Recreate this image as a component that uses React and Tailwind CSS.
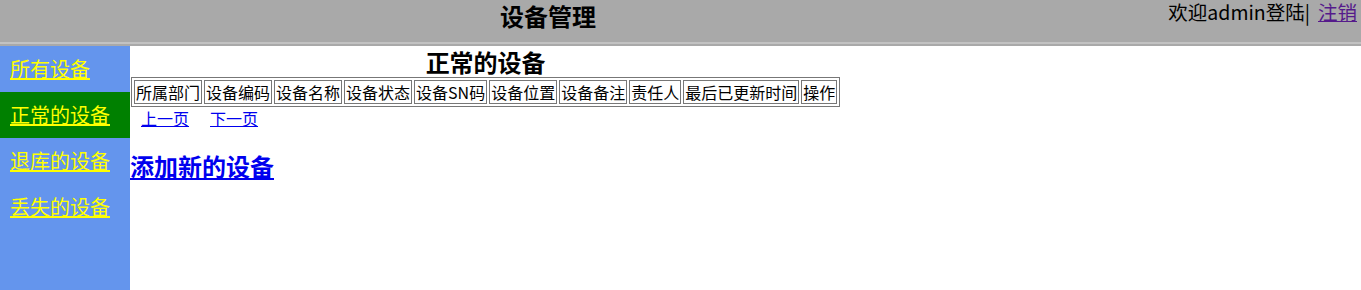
import React from "react";

const cols = ["所属部门","设备编码","设备名称","设备状态","设备SN码","设备位置","设备备注","责任人","最后已更新时间","操作"];
const navs = ["所有设备","正常的设备","退库的设备","丢失的设备"];

export default function App() {
  return (
    <div className="w-[1361px] h-[290px] overflow-hidden bg-white text-black" style={{fontFamily:'"Noto Sans CJK SC", "Noto Sans", sans-serif'}}>
      <div className="h-[42px] bg-[#a9a9a9] flex">
        <div className="w-[1096px] flex justify-center">
          <span className="text-[24px] font-bold leading-[32px]">设备管理</span>
        </div>
        <div className="flex-1 flex justify-end pr-[4px] text-[19.5px] leading-[24px]">
          <span>欢迎admin登陆|</span>
          <a href="#" className="ml-[8px] text-[#551a8b] underline">注销</a>
        </div>
      </div>
      <div className="h-[4px] bg-[#a9a9a9] border-t-[2px] border-[#c2c2c2]"></div>
      <div className="flex h-[244px]">
        <div className="w-[130px] bg-[#6495ed] flex flex-col">
          {navs.map((n,i)=>(
            <div key={n} className={"h-[46px] flex items-center pl-[10px] " + (i===1 ? "bg-[#008000]" : "")}>
              <a href="#" className="text-[#ffff00] underline text-[20px] leading-[26px]">{n}</a>
            </div>
          ))}
        </div>
        <div className="flex-1 flex flex-col items-start">
          <table className="border border-[#777] border-separate border-spacing-[2px] ml-[1px]">
            <caption className="text-[24px] font-bold leading-[31px] text-center">正常的设备</caption>
            <tbody>
              <tr>
                {cols.map(c=>(
                  <td key={c} className="border border-[#777] px-[1px] text-[16px] leading-[22px] whitespace-nowrap">{c}</td>
                ))}
              </tr>
            </tbody>
          </table>
          <div className="pl-[11px] text-[16px] leading-[22px] flex gap-[21px]">
            <a href="#" className="text-[#0000ee] underline">上一页</a>
            <a href="#" className="text-[#0000ee] underline">下一页</a>
          </div>
          <a href="#" className="mt-[22px] text-[24px] font-bold leading-[30px] text-[#0000ee] underline">添加新的设备</a>
        </div>
      </div>
    </div>
  );
}
